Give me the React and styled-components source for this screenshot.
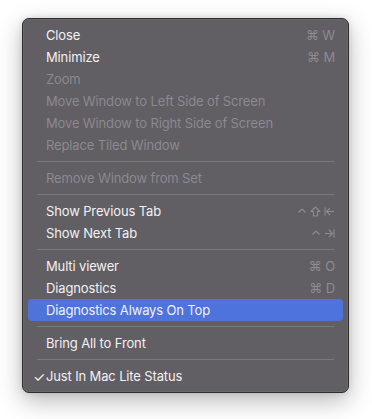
import styled, { createGlobalStyle } from 'styled-components'

const GlobalStyle = createGlobalStyle`
  body {
    margin: 0;
    background: #ffffff;
    font-family: Inter, "Noto Sans", sans-serif;
    -webkit-font-smoothing: antialiased;
  }
`

const Page = styled.div`
  width: 372px;
  height: 419px;
  padding: 18px 0 0 22px;
  box-sizing: border-box;
`

const Menu = styled.div`
  width: 327px;
  box-sizing: border-box;
  padding: 5px 5px;
  background: #615e64;
  border: 1px solid #2e2d30;
  border-radius: 7px;
  box-shadow: 0 0 0 0.5px rgba(255, 255, 255, 0.12) inset, 0 8px 24px rgba(0, 0, 0, 0.28), 0 0 6px rgba(0, 0, 0, 0.12);
`

const Item = styled.div`
  display: flex;
  align-items: center;
  height: 22px;
  padding: 0 8px 0 18px;
  border-radius: 4px;
  font-size: 13px;
  letter-spacing: -0.14px;
  color: ${p => (p.disabled ? '#8c898f' : '#f2f1f3')};
  background: ${p => (p.active ? '#4e74dc' : 'transparent')};
  position: relative;
`

const Check = styled.span`
  position: absolute;
  left: 5px;
  font-size: 14px;
`

const Label = styled.span`
  flex: 1;
`

const Shortcut = styled.span`
  color: #8e8b91;
  font-size: 13px;
  display: flex;
  align-items: center;
  gap: 3px;
`

const Separator = styled.div`
  height: 1px;
  margin: 5px 9px 5px 9px;
  background: #7a777d;
`

const Glyph = styled.svg`
  display: block;
`

const Ctrl = () => (
  <Glyph width="10" height="10" viewBox="0 0 10 10">
    <path d="M1.5 6.5 L5 3 L8.5 6.5" fill="none" stroke="#8e8b91" strokeWidth="1.2" />
  </Glyph>
)

const Shift = () => (
  <Glyph width="11" height="11" viewBox="0 0 11 11">
    <path d="M5.5 1 L10 5.5 L7.5 5.5 L7.5 10 L3.5 10 L3.5 5.5 L1 5.5 Z" fill="none" stroke="#8e8b91" strokeWidth="1.1" strokeLinejoin="round" />
  </Glyph>
)

const BackTab = () => (
  <Glyph width="11" height="11" viewBox="0 0 11 11">
    <path d="M1 1.5 L1 9.5 M10 5.5 L2.5 5.5 M6 2 L2.5 5.5 L6 9" fill="none" stroke="#8e8b91" strokeWidth="1.1" />
  </Glyph>
)

const Tab = () => (
  <Glyph width="11" height="11" viewBox="0 0 11 11">
    <path d="M10 1.5 L10 9.5 M1 5.5 L8.5 5.5 M5 2 L8.5 5.5 L5 9" fill="none" stroke="#8e8b91" strokeWidth="1.1" />
  </Glyph>
)

const Row = ({ children, shortcut, disabled, active, checked }) => (
  <Item disabled={disabled} active={active}>
    {checked && <Check>✓</Check>}
    <Label>{children}</Label>
    {shortcut && <Shortcut>{shortcut}</Shortcut>}
  </Item>
)

export default function App() {
  return (
    <>
      <GlobalStyle />
      <Page>
        <Menu>
          <Row shortcut="⌘ W">Close</Row>
          <Row shortcut="⌘ M">Minimize</Row>
          <Row disabled>Zoom</Row>
          <Row disabled>Move Window to Left Side of Screen</Row>
          <Row disabled>Move Window to Right Side of Screen</Row>
          <Row disabled>Replace Tiled Window</Row>
          <Separator />
          <Row disabled>Remove Window from Set</Row>
          <Separator />
          <Row shortcut={<><Ctrl /><Shift /><BackTab /></>}>Show Previous Tab</Row>
          <Row shortcut={<><Ctrl /><Tab /></>}>Show Next Tab</Row>
          <Separator />
          <Row shortcut="⌘ O">Multi viewer</Row>
          <Row shortcut="⌘ D">Diagnostics</Row>
          <Row active>Diagnostics Always On Top</Row>
          <Separator />
          <Row>Bring All to Front</Row>
          <Separator />
          <Row checked>Just In Mac Lite Status</Row>
        </Menu>
      </Page>
    </>
  )
}
